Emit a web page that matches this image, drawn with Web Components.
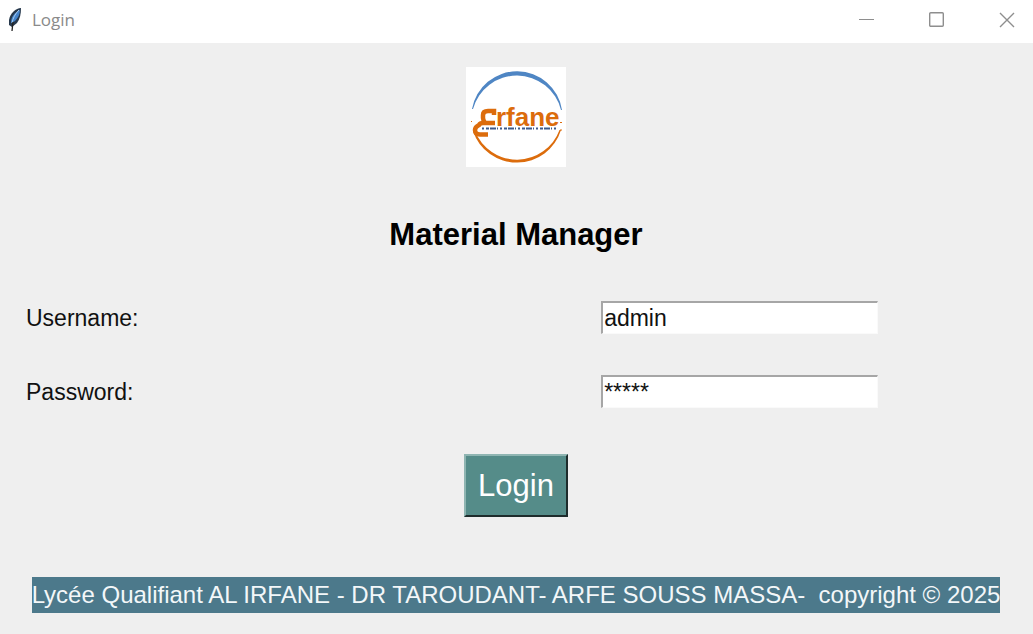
<!DOCTYPE html>
<html lang="fr">
<head>
<meta charset="utf-8">
<title>Login</title>
<style>
body { margin: 0; background: #efefef; font-family: "Liberation Sans", Arial, sans-serif; color: #111; }
</style>
</head>
<body>
<login-window></login-window>

<template id="title-bar">
  <style>
    :host { display: flex; align-items: center; justify-content: space-between; height: 43px; background: #fff; padding: 0 18px 4px 8px; box-sizing: border-box; }
    .name { display: flex; align-items: center; gap: 10px; font: 17px/24px "Open Sans", sans-serif; color: #8a8a8a; }
    .controls { display: flex; gap: 54px; }
    button { display: flex; padding: 0; border: 0; background: none; color: #8e8e8e; }
    svg { display: block; }
  </style>
  <div class="name">
    <svg width="14" height="24" viewBox="0 0 14 24" aria-hidden="true">
      <path d="M13 0C8 0 2 5 1 12L1 17L4 19L9 15C12 11 13 6 13 0Z" fill="#26384c"/>
      <path d="M12 2C6 5 3 9 3 15L7 13C10 10 12 6 12 2Z" fill="#4484cc"/>
      <path d="M11 2C7 6 5 10 4 15" fill="none" stroke="#a9cdf0"/>
      <path d="M5 14L4 23" fill="none" stroke="#222" stroke-width="1.3"/>
    </svg>
    <span><slot></slot></span>
  </div>
  <div class="controls">
    <button type="button" aria-label="Minimize"><svg width="16" height="16" viewBox="0 0 16 16"><path d="M0 7.5H15" stroke="currentColor"/></svg></button>
    <button type="button" aria-label="Maximize"><svg width="16" height="16" viewBox="0 0 16 16" fill="none"><rect x="0.700" y="0.700" width="13.600" height="13.600" rx="1" stroke="currentColor" stroke-width="1.4"/></svg></button>
    <button type="button" aria-label="Close"><svg width="16" height="16" viewBox="0 0 16 16"><path d="M1 1L15 15M15 1L1 15" stroke="currentColor" stroke-width="1.4"/></svg></button>
  </div>
</template>

<template id="school-logo">
  <style>
    :host { display: block; width: 100px; height: 100px; background: #fff; }
    svg { display: block; }
    text { font: bold 26px "Liberation Sans", Arial, sans-serif; }
  </style>
  <svg width="100" height="100" viewBox="0 0 100 100" role="img" aria-label="Erfane">
    <path d="M6 42A45.600 45.600 0 0 1 96 43L95 43A45.500 45.500 0 0 0 7 42Z" fill="#4f86c4"/>
    <path d="M7 64A46.200 46.200 0 0 0 95 63L93.500 63A45.200 45.200 0 0 1 9 64Z" fill="#dc6c0c"/>
    <path d="M28 48V44H22Q17 44 17 48V51Q17 53 19 56M29 56H17Q14 56 13 58Q9 60 9 63Q9 67.500 14 67.500H22" fill="none" stroke="#dc6c0c" stroke-width="4.500"/>
    <text x="30" y="59" fill="#dc6c0c">rfane</text>
    <path d="M16 61.500H92" stroke="#3d5a8c" stroke-width="2" stroke-dasharray="2 2 3 1 6 1 1 2"/>
    <path d="M5 54.500H6M94 55.500H96M94 63H96" stroke="#dc6c0c"/>
  </svg>
</template>

<template id="form-field">
  <style>
    :host { display: grid; grid-template-columns: 5fr 6fr; align-items: center; font-size: 23px; line-height: 28px; }
    input { justify-self: center; box-sizing: border-box; width: 277px; height: 33px; margin: 0; padding: 0 1px; border: 2px solid; border-color: #a6a6a6 #fafafa #fafafa #a6a6a6; border-width: 2px 1px 1px 2px; background: #fff; color: #111; font: inherit; outline: 0; }
    label { padding-left: 2px; }
  </style>
  <label for="entry"></label>
  <input id="entry" type="text" autocomplete="off" spellcheck="false">
</template>

<template id="raised-button">
  <style>
    :host { display: block; }
    button { display: block; box-sizing: border-box; height: 63px; margin: 0; padding: 0 12px; border: 2px solid; border-color: #8fb5b2 #1e2c2c #1e2c2c #8fb5b2; background: #558c89; color: #fff; font: 31px/36px "Liberation Sans", Arial, sans-serif; }
  </style>
  <button type="button"><slot></slot></button>
</template>

<template id="login-window">
  <style>
    :host { display: block; }
    main { display: flex; flex-direction: column; align-items: center; padding: 24px 25px 21px 24px; }
    h1 { margin: 50px 0 48px; color: #000; font-size: 31px; line-height: 36px; }
    form { align-self: stretch; display: flex; flex-direction: column; gap: 41px; margin-bottom: 46px; }
    footer { margin: 60px -8px 0; padding: 4px 0; background: #4c798b; color: #f3f7f9; font-size: 24px; line-height: 28px; white-space: pre; }
  </style>
  <title-bar>Login</title-bar>
  <main>
    <school-logo></school-logo>
    <h1>Material Manager</h1>
    <form>
      <form-field label="Username:" value="admin"></form-field>
      <form-field label="Password:" value="*****"></form-field>
    </form>
    <raised-button>Login</raised-button>
    <footer>Lycée Qualifiant AL IRFANE - DR TAROUDANT- ARFE SOUSS MASSA-  copyright © 2025</footer>
  </main>
</template>

<script>
class TemplateElement extends HTMLElement {
  constructor() {
    super();
    this.attachShadow({ mode: "open" })
      .append(document.getElementById(this.localName).content.cloneNode(true));
  }
}
class FormField extends TemplateElement {
  connectedCallback() {
    this.shadowRoot.querySelector("label").textContent = this.getAttribute("label");
    this.shadowRoot.querySelector("input").value = this.getAttribute("value") || "";
  }
}
customElements.define("title-bar", class extends TemplateElement {});
customElements.define("school-logo", class extends TemplateElement {});
customElements.define("form-field", FormField);
customElements.define("raised-button", class extends TemplateElement {});
customElements.define("login-window", class extends TemplateElement {});
</script>
</body>
</html>
